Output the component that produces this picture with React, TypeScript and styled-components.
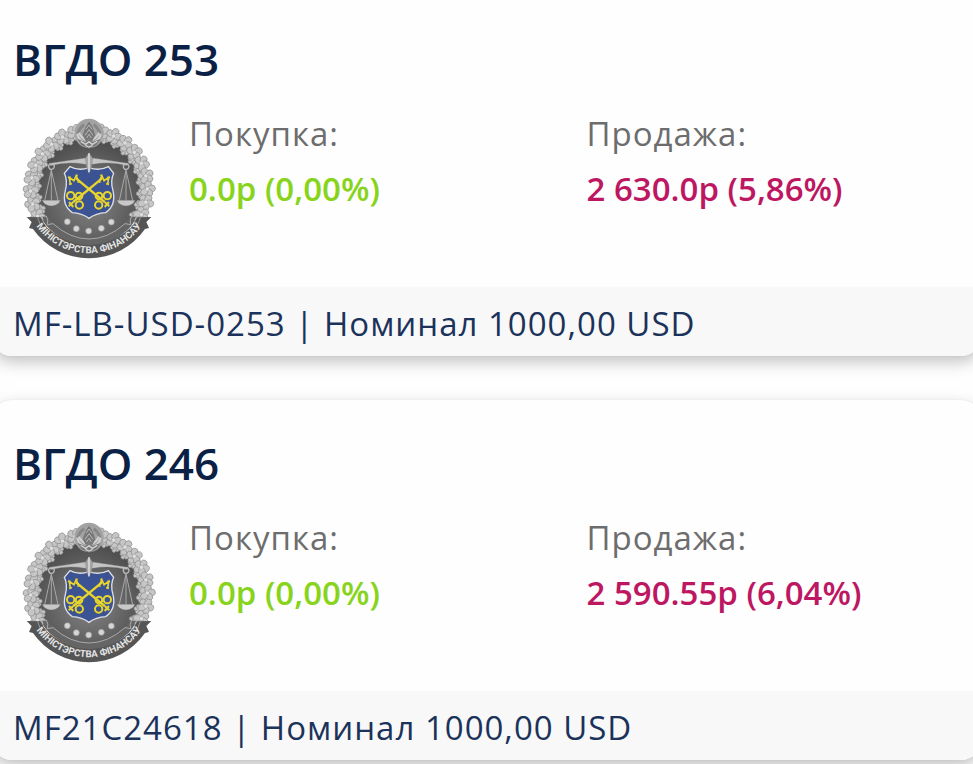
import React, { useId } from "react";
import styled, { createGlobalStyle } from "styled-components";

const GlobalStyle = createGlobalStyle`
  *, *::before, *::after { box-sizing: border-box; }
  body {
    display: flow-root;
    min-height: 100vh;
    margin: 0;
    background: #fefefe;
    font-family: "Open Sans", "Noto Sans", sans-serif;
    overflow: hidden;
  }
`;

const BondList = styled.main`
  display: flex;
  flex-direction: column;
  gap: 44px;
  margin: -4px -8px 0;
`;

const Card = styled.article`
  border-radius: 20px;
  overflow: hidden;
  background: #fefefe;
  box-shadow: 0 6px 16px rgba(0, 0, 0, 0.24), 0 0 2px rgba(0, 0, 0, 0.06);
`;

const CardBody = styled.div`
  padding: 34px 21px 25px;
`;

const Title = styled.h2`
  margin: 0;
  color: #0a2145;
  font-size: 44px;
  font-weight: 600;
  line-height: 58px;
`;

const Summary = styled.div`
  display: grid;
  grid-template-columns: 152px 1fr;
  column-gap: 24px;
  margin-top: 26px;
`;

const Quotes = styled.dl`
  display: grid;
  grid-template-columns: 1fr 1fr;
  column-gap: 24px;
  margin: 0;
`;

const Quote = styled.div`
  min-width: 0;
`;

const QuoteLabel = styled.dt`
  color: #6d6d6d;
  font-size: 33px;
  line-height: 40px;
  letter-spacing: 1px;
`;

const QuoteValue = styled.dd<{ $tone: "buy" | "sell" }>`
  margin: 12px 0 0;
  color: ${({ $tone }) => ($tone === "buy" ? "#88d41c" : "#bd1762")};
  font-size: 33px;
  font-weight: 600;
  line-height: 46px;
  white-space: nowrap;
`;

const CardFooter = styled.footer`
  padding: 14px 21px 10px;
  background: #f8f8f8;
  color: #1b335b;
  font-size: 33px;
  line-height: 45px;
  letter-spacing: 1px;
`;

const EmblemSvg = styled.svg`
  display: block;
  width: 152px;
  height: 148px;
`;

const wreathAngles = Array.from({ length: 19 }, (_, i) => 152 + i * 13);

function polar(angle: number, radius: number) {
  const a = (angle * Math.PI) / 180;
  return { x: 237 + radius * Math.cos(a), y: 237 + radius * Math.sin(a) };
}

function Cotton({ x, y, r, turn }: { x: number; y: number; r: number; turn: number }) {
  return (
    <g transform={`translate(${x} ${y}) rotate(${turn})`}>
      {[0, 72, 144, 216, 288].map((a) => (
        <ellipse key={a} cx={r * 0.55} cy="0" rx={r * 0.5} ry={r * 0.44}
          transform={`rotate(${a})`} fill="#c6c6c6" stroke="#8c8c8c" strokeWidth="2" />
      ))}
      <circle r={r * 0.26} fill="#e0e0e0" stroke="#919191" />
    </g>
  );
}

function Key() {
  return (
    <g fill="none" stroke="#e8d52c" strokeWidth="6">
      <path d="M190 276 L276 205" strokeWidth="7" />
      <path d="M-13 10 L-9 -10 L1 3 L12 -10 L14 10 M-17 10 H-8 M9 10 H18 M-14 -10 H-8 M8 -10 H16" transform="translate(282 209) rotate(14)" strokeWidth="5" />
      <circle cx="208" cy="285" r="11" />
      <circle cx="207" cy="258" r="10" />
      <circle cx="182" cy="257" r="11" />
      <path d="M177 276 L190 291 M176 289 L190 276" />
    </g>
  );
}

function Pan({ x }: { x: number }) {
  return (
    <g transform={`translate(${x} 0)`}>
      <path d="M0 180 L-20 272 M0 180 L20 272 M0 182 V272" fill="none" stroke="#a8a8a8" strokeWidth="3" />
      <path d="M-27 271 H27 Q21 287 0 288 Q-21 287 -27 271 Z" fill="#c8c8c8" stroke="#777" />
      <path d="M-5 161 Q-12 172 -3 178 Q8 180 9 168 L4 160" fill="none" stroke="#bcbcbc" strokeWidth="4" />
    </g>
  );
}

function Emblem() {
  const id = useId();
  const discId = `${id}-disc`;
  const arcId = `${id}-arc`;
  return (
    <EmblemSvg viewBox="9 12 456 444" role="img" aria-label="Міністэрства фінансаў">
      <defs>
        <radialGradient id={discId} cx="50%" cy="60%" r="55%">
          <stop offset="0" stopColor="#858585" />
          <stop offset="1" stopColor="#4c4c4c" />
        </radialGradient>
        <path id={arcId} d="M68 330 A193 193 0 0 0 406 330" />
      </defs>
      <circle cx="237" cy="237" r="168" fill={`url(#${discId})`} />
      {wreathAngles.map((a, i) => (
        <g key={a}>
          <Cotton {...polar(a + 5, 157)} r={14} turn={a + 35} />
          <Cotton {...polar(a, 175)} r={23} turn={a + i * 13} />
        </g>
      ))}

      <circle cx="237" cy="70" r="44" fill="#a2a2a2" />
      <path d="M203 70 Q209 53 222 44 M270 70 Q264 53 251 44" fill="none" stroke="#868686" strokeWidth="8" />
      <path d="M202 72 Q206 92 228 100 M272 72 Q268 92 246 100 M207 68 Q213 83 230 91 M267 68 Q261 83 244 91" fill="none" stroke="#d0d0d0" strokeWidth="6" />
      <path d="M237 35 L247 50 L256 76 L246 94 L237 88 L228 94 L218 76 L227 50 Z" fill="#777" />
      <path d="M228 58 L237 45 L246 58 M225 76 L237 59 L249 76 M230 84 L237 73 L244 84" fill="none" stroke="#b9b9b9" strokeWidth="3" />
      <path d="M203 87 L226 96 L237 88 L248 96 L271 87 L260 105 L237 116 L214 105 Z" fill="#777" />
      <path d="M212 94 L227 103 L237 95 L247 103 L262 94 M226 106 L237 111 L248 106" fill="none" stroke="#d0d0d0" strokeWidth="4" />

      <path d="M119 160 L225 144 L237 150 L249 144 L354 160 L352 167 Q300 153 249 163 H225 Q175 153 121 167 Z" fill="#c5c5c5" stroke="#707070" />
      <Pan x={124} />
      <Pan x={348} />

      <path d="M180 170 Q207 184 237 173 Q267 184 295 170 L311 190 Q300 213 309 242 Q319 286 287 308 Q258 310 237 325 Q216 310 187 308 Q155 286 166 242 Q174 213 163 190 Z"
        fill="#3b5293" stroke="#dedfe3" strokeWidth="4" />
      <Key />
      <g transform="translate(474 0) scale(-1 1)">
        <Key />
      </g>

      <path d="M237 128 L248 145 L244 174 L237 190 L230 174 L226 145 Z" fill="#a5a5a5" stroke="#777" />
      <path d="M237 130 V187" stroke="#d9d9d9" strokeWidth="5" />

      <path d="M50 321 L92 322 Q100 340 112 353 Q167 402 237 402 Q307 402 362 353 Q374 340 382 322 L424 321 L409 336 L417 354 L405 357 A205 205 0 0 1 69 357 L57 354 L65 336 Z"
        fill="#555" />
      <path d="M96 319 L114 319 Q122 336 131 339 Q178 385 237 385 Q296 385 343 339 Q352 336 360 319 L378 319 Q371 341 354 358 Q303 405 237 405 Q171 405 120 358 Q103 341 96 319 Z"
        fill="#656565" />
      <path d="M92 321 L109 318 Q116 331 112 344 L129 341 Q181 387 237 387 Q293 387 345 341 L362 344 Q358 331 365 318 L382 321" fill="none" stroke="#a9a9a9" strokeWidth="3" />
      <path d="M83 323 Q89 345 101 358 M391 323 Q385 345 373 358" fill="none" stroke="#999" strokeWidth="3" />

      {[[172, 335], [199, 356], [236, 363], [274, 355], [304, 336]].map(([x, y]) => (
        <circle key={x} cx={x} cy={y} r="9" fill="#d6d6d6" stroke="#999" strokeWidth="2" />
      ))}
      <text fill="#e4e4e4" fontFamily='"Liberation Sans Narrow", Roboto, sans-serif' fontSize="29" fontWeight="700" textAnchor="middle">
        <textPath href={`#${arcId}`} startOffset="50%">МІНІСТЭРСТВА ФІНАНСАЎ</textPath>
      </text>
    </EmblemSvg>
  );
}

type Bond = { title: string; buy: string; sell: string; code: string; nominal: string };

const bonds: Bond[] = [
  { title: "ВГДО 253", buy: "0.0р (0,00%)", sell: "2 630.0р (5,86%)", code: "MF-LB-USD-0253", nominal: "1000,00 USD" },
  { title: "ВГДО 246", buy: "0.0р (0,00%)", sell: "2 590.55р (6,04%)", code: "MF21C24618", nominal: "1000,00 USD" },
];

function BondCard({ bond }: { bond: Bond }) {
  return (
    <Card>
      <CardBody>
        <Title>{bond.title}</Title>
        <Summary>
          <Emblem />
          <Quotes>
            <Quote>
              <QuoteLabel>Покупка:</QuoteLabel>
              <QuoteValue $tone="buy">{bond.buy}</QuoteValue>
            </Quote>
            <Quote>
              <QuoteLabel>Продажа:</QuoteLabel>
              <QuoteValue $tone="sell">{bond.sell}</QuoteValue>
            </Quote>
          </Quotes>
        </Summary>
      </CardBody>
      <CardFooter>{`${bond.code} | Номинал ${bond.nominal}`}</CardFooter>
    </Card>
  );
}

export default function App() {
  return (
    <>
      <GlobalStyle />
      <BondList>
        {bonds.map((bond) => (
          <BondCard key={bond.title} bond={bond} />
        ))}
      </BondList>
    </>
  );
}
